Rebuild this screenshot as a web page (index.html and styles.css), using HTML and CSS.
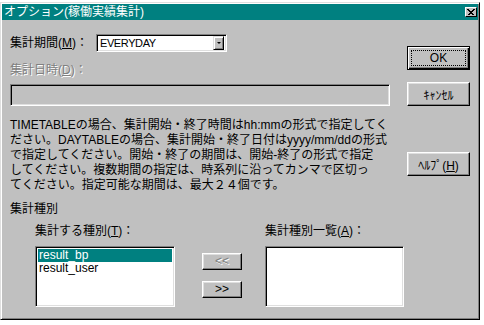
FILE: index.html
```html
<!DOCTYPE html>
<html>
<head>
  <title>オプション(稼働実績集計)</title>
  <link rel="stylesheet" href="styles.css">
</head>
<body>
  <div class="window">
    <div class="titlebar">
      <span class="title">オプション(稼働実績集計)</span>
      <span class="close">
        <svg width="8" height="7" viewBox="0 0 8 7">
          <path d="M0.5 0.5L6.5 6.5M1.5 0.5L7.5 6.5M6.5 0.5L0.5 6.5M7.5 0.5L1.5 6.5" stroke="#000" stroke-width="1" fill="none" shape-rendering="crispEdges"/>
        </svg>
      </span>
    </div>

    <div class="content">
      <div class="top">
        <div class="main">
          <div class="field-row">
            <label class="label period-label">集計期間(<u>M</u>)：</label>
            <div class="combo">
              <span class="combo-value">EVERYDAY</span>
              <span class="combo-btn"><span class="arrow"></span></span>
            </div>
          </div>

          <div class="label disabled date-label">集計日時(<u>D</u>)：</div>
          <div class="edit edit-disabled"></div>

          <p class="note">
            TIMETABLEの場合、集計開始・終了時間はhh:mmの形式で指定してく<br>
            ださい。DAYTABLEの場合、集計開始・終了日付はyyyy/mm/ddの形式<br>
            で指定してください。開始・終了の期間は、開始-終了の形式で指定<br>
            してください。複数期間の指定は、時系列に沿ってカンマで区切っ<br>
            てください。指定可能な期間は、最大２４個です。
          </p>
        </div>

        <div class="side">
          <button class="btn btn-default">OK</button>
          <button class="btn">ｷｬﾝｾﾙ</button>
          <button class="btn btn-help">ﾍﾙﾌﾟ(<u>H</u>)</button>
        </div>
      </div>

      <div class="types">
        <div class="group-label">集計種別</div>
        <div class="types-row">
          <div class="list-col">
            <div class="label">集計する種別(<u>T</u>)：</div>
            <ul class="listbox">
              <li class="selected">result_bp</li>
              <li>result_user</li>
            </ul>
          </div>

          <div class="arrows">
            <button class="btn btn-small" disabled>&lt;&lt;</button>
            <button class="btn btn-small">&gt;&gt;</button>
          </div>

          <div class="list-col list-col-right">
            <div class="label">集計種別一覧(<u>A</u>)：</div>
            <ul class="listbox"></ul>
          </div>
        </div>
      </div>
    </div>
  </div>
</body>
</html>
```

FILE: styles.css
```css
body {
  margin: 0;
  background: #fff;
  font-family: "Liberation Sans", "Noto Sans CJK JP", sans-serif;
  font-size: 12px;
  color: #000;
}

.window {
  box-sizing: border-box;
  width: 480px;
  height: 318px;
  margin-top: 2px;
  padding: 1px;
  background: #c0c0c0;
  border: 1px solid;
  border-color: #dfdfdf #000 #000 #dfdfdf;
  box-shadow: inset 1px 1px #fff, inset -1px -1px #808080;
}

.titlebar {
  height: 16px;
  display: flex;
  align-items: center;
  justify-content: space-between;
  padding: 0 1px 0 2px;
  background: #008080;
  color: #fff;
  line-height: 16px;
}

.close {
  box-sizing: border-box;
  width: 12px;
  height: 10px;
  display: flex;
  align-items: center;
  justify-content: center;
  background: #c0c0c0;
  border: 1px solid;
  border-color: #fff #000 #000 #fff;
}

.content {
  padding: 14px 8px 0 8px;
}

.top {
  display: flex;
}

.main {
  width: 380px;
}

.side {
  width: 63px;
  margin-left: 17px;
  padding-top: 12px;
  display: flex;
  flex-direction: column;
}

.label {
  line-height: 15px;
  white-space: nowrap;
}

.disabled {
  color: #808080;
  text-shadow: 1px 1px 0 #fff;
}

.field-row {
  display: flex;
  align-items: center;
  height: 18px;
}

.period-label {
  width: 86px;
}

.combo {
  box-sizing: border-box;
  width: 131px;
  height: 18px;
  display: flex;
  align-items: center;
  padding: 2px;
  background: #fff;
  border: 1px solid;
  border-color: #808080 #fff #fff #808080;
  box-shadow: inset 1px 1px #000, inset -1px -1px #dfdfdf;
}

.combo-value {
  flex: 1;
  padding-left: 1px;
  font-size: 11px;
  letter-spacing: -0.4px;
  line-height: 14px;
}

.combo-btn {
  box-sizing: border-box;
  width: 11px;
  height: 14px;
  display: flex;
  align-items: center;
  justify-content: center;
  background: #c0c0c0;
  border: 1px solid;
  border-color: #dfdfdf #000 #000 #dfdfdf;
  box-shadow: inset 1px 1px #fff, inset -1px -1px #808080;
}

.arrow {
  width: 0;
  height: 0;
  border-left: 2px solid transparent;
  border-right: 2px solid transparent;
  border-top: 2px solid #000;
}

.date-label {
  margin-top: 11px;
}

.edit {
  box-sizing: border-box;
  border: 1px solid;
  border-color: #808080 #fff #fff #808080;
  box-shadow: inset 1px 1px #000, inset -1px -1px #dfdfdf;
}

.edit-disabled {
  height: 22px;
  margin-top: 6px;
  background: #c0c0c0;
}

.note {
  margin: 12px 0 0;
  line-height: 15px;
  white-space: nowrap;
}

.btn {
  box-sizing: border-box;
  height: 24px;
  padding: 0;
  font: inherit;
  color: #000;
  background: #c0c0c0;
  border: 1px solid;
  border-color: #fff #000 #000 #fff;
  box-shadow: inset -1px -1px #808080, inset 1px 1px #dfdfdf;
}

.btn + .btn {
  margin-top: 12px;
}

.btn-default {
  border-color: #000;
  box-shadow: inset 1px 1px #fff, inset -1px -1px #000, inset -2px -2px #808080;
  outline: 1px dotted #000;
  outline-offset: -5px;
}

.side .btn-help {
  margin-top: 46px;
}

.btn:disabled {
  color: #808080;
  text-shadow: 1px 1px 0 #fff;
}

.types {
  margin-top: 9px;
}

.group-label {
  line-height: 15px;
}

.types-row {
  display: flex;
  align-items: flex-start;
  margin-top: 7px;
  padding-left: 25px;
}

.list-col {
  width: 140px;
}

.list-col-right {
  width: 139px;
}

.listbox {
  box-sizing: border-box;
  height: 61px;
  margin: 7px 0 0;
  padding: 2px;
  list-style: none;
  background: #fff;
  border: 1px solid;
  border-color: #808080 #fff #fff #808080;
  box-shadow: inset 1px 1px #000, inset -1px -1px #dfdfdf;
}

.listbox li {
  height: 13px;
  line-height: 13px;
  padding-left: 1px;
}

.listbox .selected {
  background: #008080;
  color: #fff;
}

.arrows {
  width: 40px;
  margin: 29px 23px 0 27px;
  display: flex;
  flex-direction: column;
}

.btn-small {
  height: 17px;
  line-height: 13px;
}

.arrows .btn + .btn {
  margin-top: 11px;
}
```
